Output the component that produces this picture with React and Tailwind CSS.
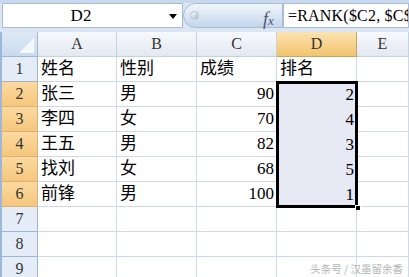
const cols = ['A', 'B', 'C', 'D', 'E'];
const rows = [
  ['姓名', '性别', '成绩', '排名'],
  ['张三', '男', '90', '2'],
  ['李四', '女', '70', '4'],
  ['王五', '男', '82', '3'],
  ['找刘', '女', '68', '5'],
  ['前锋', '男', '100', '1'],
  ['', '', '', ''],
  ['', '', '', ''],
  ['', '', '', ''],
];

const font = { fontFamily: '"Liberation Serif", "Noto Sans CJK SC", serif' };

export default function App() {
  return (
    <div className="w-[409px] h-[277px] overflow-hidden bg-white relative" style={font}>
      {/* formula bar */}
      <div className="h-[32px] bg-[#dbe6f4] border-t-[3px] border-[#c8d9ef] flex pl-[2px] pb-[4px]">
        <div className="w-[181px] bg-white border border-[#a7bcd7] flex items-center relative">
          <span className="w-[156px] text-center text-[17px] text-black leading-none">D2</span>
          <span className="absolute left-[166px] top-[10px] w-0 h-0 border-l-[4px] border-r-[4px] border-t-[5px] border-l-transparent border-r-transparent border-t-black" />
        </div>
        <div className="w-[100px] rounded-l-full bg-gradient-to-b from-[#f0f5fb] via-[#dbe6f3] to-[#c4d5ea] border border-[#a7bcd7] flex items-center relative">
          <span className="ml-[6px] w-[9px] h-[9px] rounded-full bg-gradient-to-br from-[#ffffff] to-[#aab8c8] border border-[#b6c3d3]" />
          <span className="absolute left-[79px] top-[2px] italic text-[18px] text-[#4c5a6e]" style={{ fontFamily: '"Liberation Serif", serif' }}>
            f<span className="text-[13px]">x</span>
          </span>
        </div>
        <div className="flex-1 bg-white border border-[#a7bcd7] flex items-center pl-[4px] text-[16px] tracking-[0.2px] text-black whitespace-nowrap overflow-hidden">
          =RANK($C2, $C$
        </div>
      </div>

      {/* grid */}
      <div className="grid grid-cols-[36px_79px_80px_80px_80px_52px] border-l-[2px] border-[#9ab8dd]">
        <div className="h-[25px] bg-gradient-to-b from-[#dfe9f5] to-[#c9daee] border-r border-b border-[#9eb6ce] relative">
          <svg className="absolute right-[3px] bottom-[3px]" width="15" height="15" viewBox="0 0 15 15">
            <polygon points="15,0 15,15 0,15" fill="#f4f8fd" />
          </svg>
        </div>
        {cols.map((c) => (
          <div
            key={c}
            className={`h-[25px] flex items-center justify-center text-[16px] text-[#333] border-r border-b ${
              c === 'D'
                ? 'bg-gradient-to-b from-[#fbe3b2] to-[#f3c46b] border-[#c9a461]'
                : 'bg-gradient-to-b from-[#f7f9fc] to-[#e3e9f1] border-[#c5d2e2]'
            }`}
          >
            {c}
          </div>
        ))}
        {rows.map((r, i) => {
          const sel = i >= 1 && i <= 5;
          return [
            <div
              key={`h${i}`}
              className={`h-[25px] flex items-center justify-center text-[16px] text-[#333] border-r border-b ${
                sel
                  ? 'bg-gradient-to-b from-[#fbd9a0] to-[#f6c77c] border-[#dcb27a]'
                  : 'bg-[#e4ecf7] border-[#9eb6ce]'
              }`}
            >
              {i + 1}
            </div>,
            <div key={`a${i}`} className="h-[25px] flex items-center pl-[3px] text-[17px] text-black border-r border-b border-[#d0d7e5]">
              {r[0]}
            </div>,
            <div key={`b${i}`} className="h-[25px] flex items-center pl-[3px] text-[17px] text-black border-r border-b border-[#d0d7e5]">
              {r[1]}
            </div>,
            <div key={`c${i}`} className={`h-[25px] flex items-center text-[17px] text-black border-r border-b border-[#d0d7e5] ${i === 0 ? 'pl-[3px]' : 'justify-end pr-[2px]'}`}>
              {r[2]}
            </div>,
            <div
              key={`d${i}`}
              className={`h-[25px] flex items-center text-[17px] text-black relative ${
                i === 0 ? 'pl-[3px] border-r border-b border-[#d0d7e5]' : sel ? 'justify-end pr-[3px] bg-[#e6e9f4]' : 'border-r border-b border-[#d0d7e5]'
              }`}
            >
              {r[3]}
            </div>,
            <div key={`e${i}`} className="h-[25px] border-r border-b border-[#d0d7e5]" />,
          ];
        })}
      </div>

      {/* selection border D2:D6 */}
      <div className="absolute left-[276px] top-[81px] w-[82px] h-[127px] border-[3px] border-black pointer-events-none" />
      <div className="absolute left-[355px] top-[205px] w-[6px] h-[6px] bg-black border border-white" />

      {/* watermark */}
      <div className="absolute right-[6px] top-[261px] text-[10.5px] text-[#b4b4b4] whitespace-nowrap" style={{ fontFamily: '"Noto Sans CJK SC", sans-serif' }}>
        头条号 / 汉墨留余香
      </div>
    </div>
  );
}
